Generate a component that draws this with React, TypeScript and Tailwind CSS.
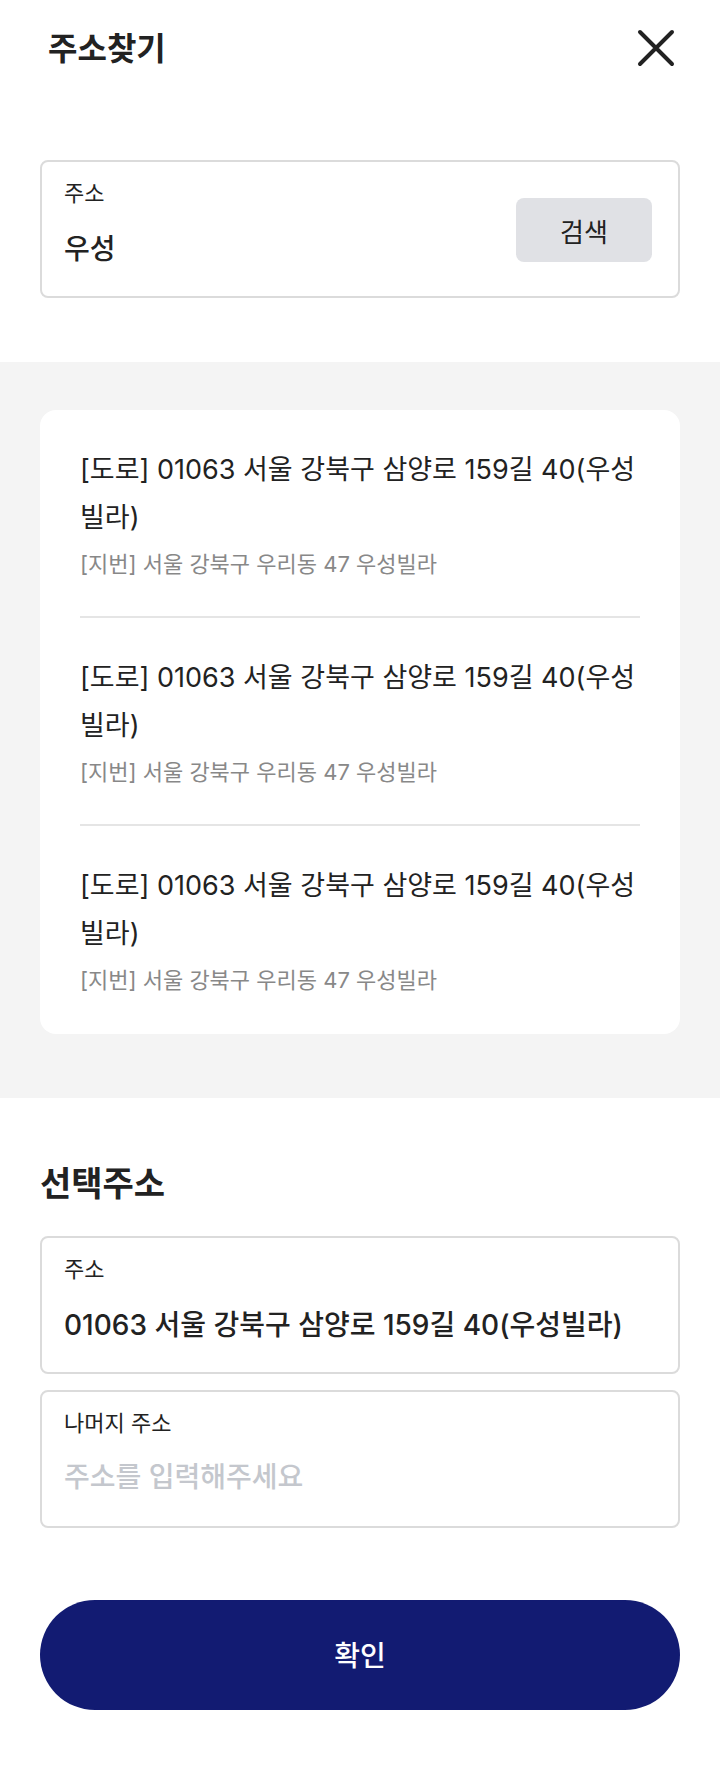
import { useId, useState } from "react";
import type { InputHTMLAttributes, ReactNode } from "react";

type Address = { road: string; lot: string };

const results: Address[] = [
  { road: "[도로] 01063 서울 강북구 삼양로 159길 40(우성빌라)", lot: "[지번] 서울 강북구 우리동 47 우성빌라" },
  { road: "[도로] 01063 서울 강북구 삼양로 159길 40(우성빌라)", lot: "[지번] 서울 강북구 우리동 47 우성빌라" },
  { road: "[도로] 01063 서울 강북구 삼양로 159길 40(우성빌라)", lot: "[지번] 서울 강북구 우리동 47 우성빌라" },
];

type FieldProps = InputHTMLAttributes<HTMLInputElement> & { label: string; action?: ReactNode };

function Field({ label, action, ...input }: FieldProps) {
  const id = useId();
  return (
    <div className="flex items-center gap-4 rounded-lg border-2 border-[#dbdbdb] bg-white py-[13px] pr-[26px] pl-[22px]">
      <div className="flex min-w-0 flex-1 flex-col gap-1.5 pb-1.5">
        <label htmlFor={id} className="text-[22px] leading-9">
          {label}
        </label>
        <input
          id={id}
          className="h-[60px] w-full bg-transparent text-[28px] font-medium outline-none placeholder:text-[#c4c7cd] placeholder:opacity-100"
          {...input}
        />
      </div>
      {action}
    </div>
  );
}

export default function App() {
  const [query, setQuery] = useState("우성");
  const [selected, setSelected] = useState("01063 서울 강북구 삼양로 159길 40(우성빌라)");
  const [detail, setDetail] = useState("");

  return (
    <main className="min-h-screen bg-white font-['Inter','Noto_Sans_CJK_KR',sans-serif] text-[#222]">
      <header className="flex h-24 items-center justify-between pr-10 pl-12">
        <h1 className="pt-0.5 text-[32px] leading-12 font-bold">주소찾기</h1>
        <button type="button" aria-label="닫기" className="p-1">
          <svg width="40" height="40" viewBox="0 0 40 40" fill="none" stroke="#222" strokeWidth="4" strokeLinecap="round">
            <path d="M4 4 36 36M36 4 4 36" />
          </svg>
        </button>
      </header>

      <section className="px-10 py-16">
        <Field
          label="주소"
          value={query}
          onChange={(e) => setQuery(e.target.value)}
          action={
            <button type="button" className="mt-0.5 h-16 w-[136px] rounded-lg bg-[#e0e1e5] pt-1 text-[26px]">
              검색
            </button>
          }
        />
      </section>

      <section className="bg-[#f4f4f4] px-10 pt-12 pb-16">
        <ul className="rounded-2xl bg-white px-10">
          {results.map((item, i) => (
            <li key={i} className="border-b-2 border-[#e5e5e5] pt-9 pb-[30px] last:border-transparent">
              <p className="text-[27px] leading-12">{item.road}</p>
              <p className="text-[22px] leading-11 text-[#888]">{item.lot}</p>
            </li>
          ))}
        </ul>
      </section>

      <section className="px-10 pt-14 pb-20">
        <h2 className="pt-0.5 text-[34px] leading-14 font-bold">선택주소</h2>
        <div className="mt-6 flex flex-col gap-4">
          <Field label="주소" value={selected} onChange={(e) => setSelected(e.target.value)} />
          <Field
            label="나머지 주소"
            placeholder="주소를 입력해주세요"
            value={detail}
            onChange={(e) => setDetail(e.target.value)}
          />
        </div>
        <button type="button" className="mt-18 h-[110px] w-full rounded-full bg-[#121b72] pt-0.5 text-[28px] font-medium text-white">
          확인
        </button>
      </section>
    </main>
  );
}
